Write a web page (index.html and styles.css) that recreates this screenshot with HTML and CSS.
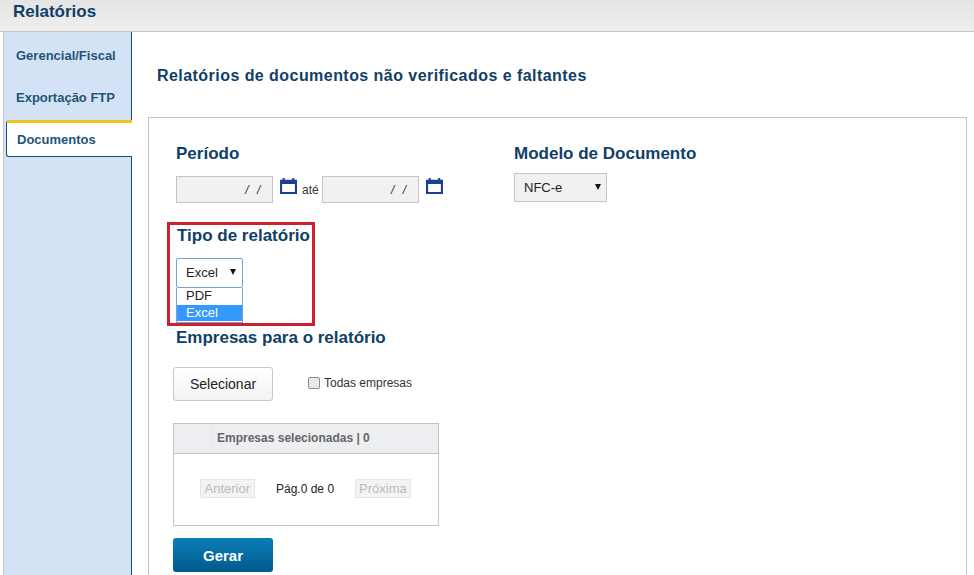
FILE: index.html
```html
<!DOCTYPE html>
<html lang="pt">
<head>
<meta charset="utf-8">
<title>Relatórios</title>
<link rel="stylesheet" href="styles.css">
</head>
<body>
<header class="topbar">Relatórios</header>
<div class="shell">
  <nav class="sidenav">
    <a class="tab">Gerencial/Fiscal</a>
    <a class="tab">Exportação FTP</a>
    <a class="tab tab-active">Documentos</a>
  </nav>
  <main class="content">
    <h1 class="page-title">Relatórios de documentos não verificados e faltantes</h1>
    <section class="panel">
      <div class="row-top">
        <div class="col-period">
          <h2 class="label">Período</h2>
          <div class="dates">
            <span class="date-input"><em>/ &nbsp;/</em></span>
            <svg class="cal" viewBox="0 0 16 16" width="17" height="17"><path fill="#1f3f8f" d="M0 2.5h2.5V1h2v1.5h7V1h2v1.5H16V16H0zM2 6.5V14h12V6.5z"/></svg>
            <span class="ate">até</span>
            <span class="date-input"><em>/ &nbsp;/</em></span>
            <svg class="cal" viewBox="0 0 16 16" width="17" height="17"><path fill="#1f3f8f" d="M0 2.5h2.5V1h2v1.5h7V1h2v1.5H16V16H0zM2 6.5V14h12V6.5z"/></svg>
          </div>
        </div>
        <div class="col-model">
          <h2 class="label">Modelo de Documento</h2>
          <div class="select select-model"><span>NFC-e</span><i class="caret"></i></div>
        </div>
      </div>
      <div class="report-type">
        <h2 class="label label-type">Tipo de relatório</h2>
        <div class="select select-type"><span>Excel</span><i class="caret"></i></div>
        <ul class="options">
          <li>PDF</li>
          <li class="option-on">Excel</li>
        </ul>
        <div class="highlight"></div>
      </div>
      <h2 class="label label-companies">Empresas para o relatório</h2>
      <div class="picker">
        <button class="btn-select" type="button">Selecionar</button>
        <label class="check"><i class="box"></i>Todas empresas</label>
      </div>
      <div class="table">
        <div class="table-head"><span class="head-spacer"></span><span class="head-text">Empresas selecionadas | 0</span></div>
        <div class="pager">
          <span class="page-btn">Anterior</span>
          <span class="page-info">Pág.0 de 0</span>
          <span class="page-btn">Próxima</span>
        </div>
      </div>
      <button class="btn-generate" type="button">Gerar</button>
    </section>
  </main>
</div>
</body>
</html>
```
FILE: styles.css
```css
* { box-sizing: border-box; }
html, body { margin: 0; height: 575px; overflow: hidden; background: #fff; }
body { font-family: "Liberation Sans", Arial, sans-serif; color: #222; }
h1, h2, ul { margin: 0; padding: 0; }

.topbar {
  height: 32px;
  padding: 2px 0 0 13px;
  background: linear-gradient(#e4e4e4, #efefef);
  border-bottom: 1px solid #c4c4c4;
  font-size: 17px;
  line-height: 20px;
  font-weight: bold;
  color: #0f3f68;
}

.shell { display: flex; height: 543px; }

.sidenav {
  width: 129px;
  margin-left: 3px;
  flex: none;
  padding-top: 1px;
  background: #d3e2f4;
  border-left: 1px solid #c9c9c9;
  border-right: 1px solid #1c4e78;
  display: flex;
  flex-direction: column;
}
.tab {
  height: 42px;
  padding: 15px 0 0 12px;
  font-size: 13px;
  line-height: 16px;
  font-weight: bold;
  color: #1f5478;
}
.tab-active {
  position: relative;
  margin: 3px -1px 0 2px;
  height: 37px;
  padding: 9px 0 0 10px;
  background: #fff;
  color: #1f5478;
  border-top: 3px solid #eec520;
  border-left: 1px solid #1c4e78;
  border-bottom: 1px solid #1c4e78;
  border-radius: 3px 0 0 3px;
}

.content { flex: 1; padding: 0 7px 0 16px; min-width: 0; }
.page-title {
  height: 85px;
  padding: 34px 0 0 9px;
  font-size: 16px;
  line-height: 19px;
  font-weight: bold;
  letter-spacing: 0.45px;
  color: #0f3f68;
}

.panel {
  height: 470px;
  padding: 26px 0 0 25px;
  border: 1px solid #c4c4c4;
}

.label {
  font-size: 17px;
  line-height: 19px;
  font-weight: bold;
  color: #0f3f68;
}

.row-top { display: flex; }
.col-period { width: 338px; flex: none; margin-left: 2px; }
.dates { display: flex; align-items: flex-start; margin-top: 13px; }
.date-input {
  width: 97px;
  height: 27px;
  padding: 4px 11px 0 0;
  text-align: right;
  background: #f1f1f1;
  border: 1px solid #c4c4c4;
  font-size: 12px;
  line-height: 18px;
  color: #333;
}
.date-input em { font-style: italic; letter-spacing: 0.6px; }
.cal { margin: 1px 0 0 7px; flex: none; }
.ate { margin: 5px 3px 0 5px; font-size: 12px; line-height: 18px; color: #333; }
.col-model .label { margin-bottom: 10px; }

.select {
  position: relative;
  display: flex;
  align-items: center;
  font-size: 13px;
  color: #222;
}
.caret {
  position: absolute;
  top: 10px;
  border-left: 3.5px solid transparent;
  border-right: 3.5px solid transparent;
  border-top: 6px solid #111;
}
.select-model {
  width: 93px;
  height: 29px;
  padding-left: 9px;
  background: #f1f1f1;
  border: 1px solid #c4c4c4;
}
.select-model .caret { right: 5px; }

.report-type { position: relative; height: 125px; padding: 23px 0 0 2px; }
.label-type { margin: 0 0 13px 1px; }
.select-type {
  width: 67px;
  height: 30px;
  padding: 0 0 2px 9px;
  background: #fff;
  border: 1px solid #7a9fd0;
  border-radius: 2px;
}
.select-type .caret { right: 6px; }
.options {
  width: 67px;
  height: 35px;
  list-style: none;
  background: #fff;
  border: 1px solid #7a9fd0;
  border-top: 0;
  font-size: 13px;
}
.options li { height: 17px; line-height: 16px; padding-left: 9px; }
.options .option-on { height: 16px; background: #3399ff; color: #fff; }
.highlight {
  position: absolute;
  left: -7px;
  top: 19px;
  width: 148px;
  height: 104px;
  border: 3px solid #d0202e;
  pointer-events: none;
}

.label-companies { margin-left: 2px; }

.picker { display: flex; align-items: center; margin: 20px 0 0 -1px; }
.btn-select {
  width: 100px;
  height: 34px;
  padding: 0;
  font: 14px "Liberation Sans", Arial, sans-serif;
  color: #222;
  background: linear-gradient(#fff, #f3f3f3);
  border: 1px solid #c8c8c8;
  border-radius: 3px;
}
.check { display: flex; align-items: center; margin: -2px 0 0 35px; font-size: 12px; color: #333; }
.box {
  width: 12px;
  height: 12px;
  margin-right: 4px;
  background: #e9e9e9;
  border: 1px solid #8c8c8c;
  border-radius: 2px;
}

.table {
  width: 266px;
  height: 103px;
  margin: 22px 0 0 -1px;
  border: 1px solid #c4c4c4;
}
.table-head {
  display: flex;
  height: 30px;
  background: #eceef1;
  border-bottom: 1px solid #c4c4c4;
  font-size: 12px;
  font-weight: bold;
  color: #666;
}
.head-spacer { width: 38px; border-right: 1px solid #e6e8eb; }
.head-text { padding: 6px 0 0 5px; line-height: 16px; }
.pager { display: flex; align-items: flex-start; padding: 25px 0 0 26px; font-size: 12px; }
.page-btn {
  height: 19px;
  padding: 0 3.5px;
  line-height: 18px;
  font-size: 13px;
  background: #f3f3f3;
  border: 1px solid #e6e6e6;
  color: #bbb;
}
.page-info { width: 100px; margin-top: 2px; padding-left: 1px; text-align: center; line-height: 17px; color: #222; }

.btn-generate {
  display: block;
  width: 100px;
  height: 34px;
  margin: 12px 0 0 -1px;
  padding: 0;
  font: bold 15px "Liberation Sans", Arial, sans-serif;
  color: #fff;
  background: linear-gradient(#0a7db8, #03598c);
  border: 0;
  border-radius: 3px;
}
```
